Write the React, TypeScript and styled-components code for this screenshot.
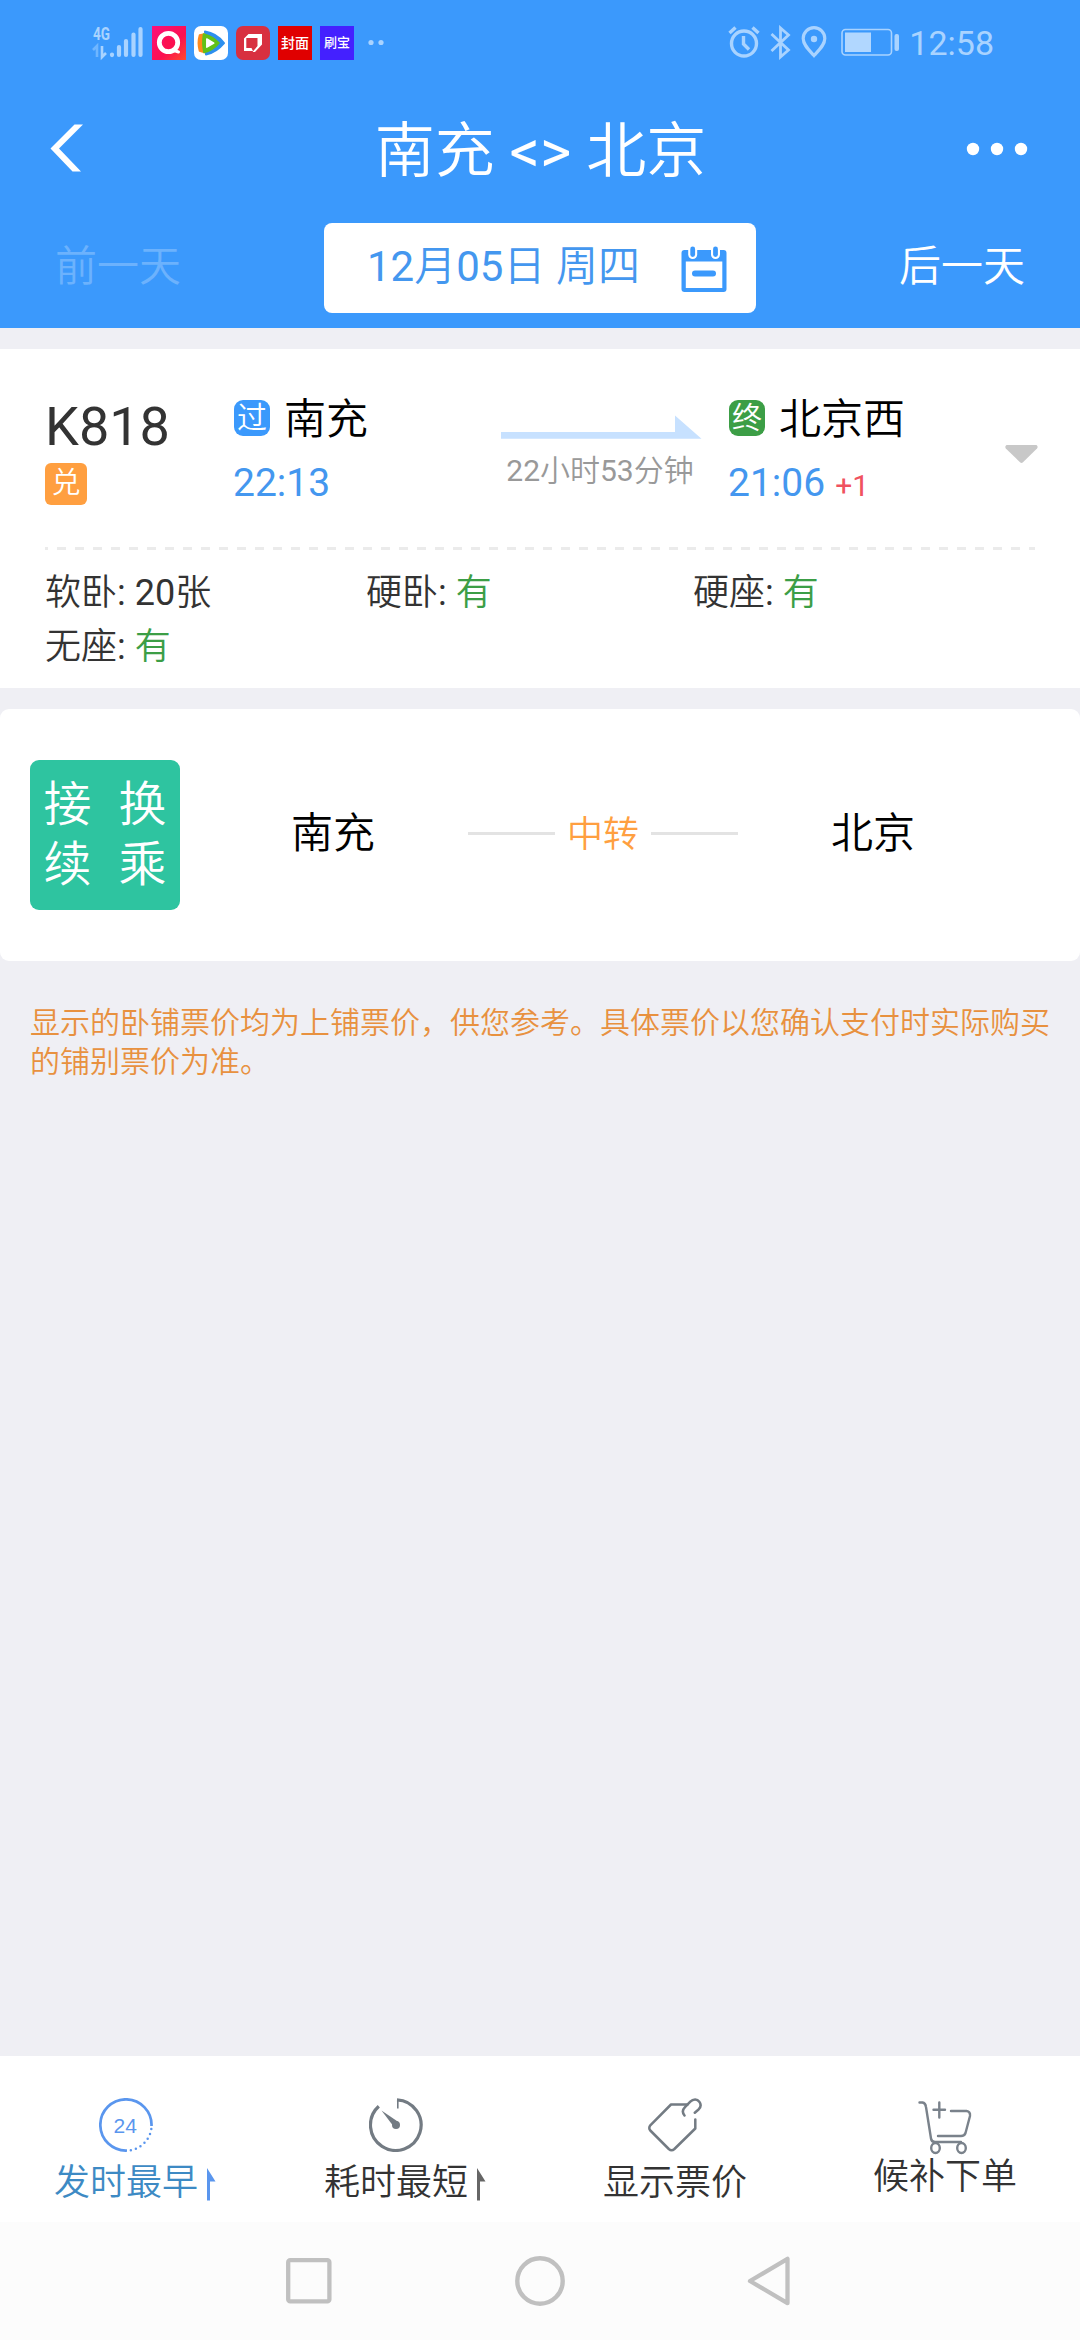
import React from 'react';
import styled, { createGlobalStyle } from 'styled-components';

const BLUE = '#3b99fc';
const INK = '#333333';
const GREEN = '#3c9e46';
const ORANGE = '#ff9f40';
const STATUS = '#a9d3ff';

const GlobalStyle = createGlobalStyle`
  * { box-sizing: border-box; }
  body {
    margin: 0;
    background: #efeff4;
    font-family: Roboto, "Noto Sans CJK SC", sans-serif;
    font-weight: 400;
    color: ${INK};
  }
  svg { display: block; flex: none; }
`;

const Screen = styled.div`
  width: 1080px;
  height: 2340px;
  display: flex;
  flex-direction: column;
  background: #efeff4;
  overflow: hidden;
`;

/* Chinese runs are set one step lighter than the digits beside them. */
const Han = styled.span`
  font-weight: 350;
`;

/* ---------- header ---------- */

const Header = styled.header`
  height: 328px;
  background: ${BLUE};
  display: flex;
  flex-direction: column;
`;

const StatusBar = styled.div`
  height: 86px;
  padding: 0 86px 0 90px;
  display: flex;
  justify-content: space-between;
  align-items: center;
`;

const StatusGroup = styled.div<{ $gap: number }>`
  display: flex;
  align-items: center;
  gap: ${(p) => p.$gap}px;
`;

const Clock = styled.span`
  font-size: 34px;
  line-height: 40px;
  color: ${STATUS};
  margin-left: 2px;
`;

const AppIcon = styled.span<{ $bg: string; $radius?: number; $size?: number }>`
  width: 34px;
  height: 34px;
  display: flex;
  align-items: center;
  justify-content: center;
  background: ${(p) => p.$bg};
  border-radius: ${(p) => p.$radius ?? 0}px;
  color: #fff;
  font-size: ${(p) => p.$size ?? 14}px;
  font-weight: 500;
  line-height: 34px;
  white-space: nowrap;
`;

const TitleBar = styled.div`
  height: 130px;
  padding: 0 52px 0 50px;
  display: grid;
  grid-template-columns: 80px 1fr 80px;
  align-items: center;
`;

const Title = styled.h1`
  margin: 2px 0 0;
  padding-left: 3px;
  text-align: center;
  font-size: 60px;
  font-weight: 400;
  line-height: 70px;
  color: #fff;
`;

const StartSlot = styled.div`
  display: flex;
  padding-bottom: 6px;
`;

const EndSlot = styled.div`
  display: flex;
  justify-content: flex-end;
  padding-bottom: 5px;
`;

const DateBar = styled.div`
  height: 104px;
  margin-top: 7px;
  padding: 0 55px 0 55px;
  display: grid;
  grid-template-columns: 269px 432px 269px;
  align-items: start;
`;

const DayLink = styled.span<{ $dim?: boolean; $end?: boolean }>`
  font-size: 42px;
  font-weight: 350;
  line-height: 87px;
  color: ${(p) => (p.$dim ? '#6cb2fd' : '#fff')};
  text-align: ${(p) => (p.$end ? 'right' : 'left')};
`;

const DateBox = styled.div`
  height: 90px;
  border-radius: 8px;
  background: #fff;
  display: flex;
  align-items: flex-start;
  justify-content: space-between;
  padding: 0 29px 0 43px;
  font-size: 42px;
  line-height: 87px;
  color: #4497ef;
`;

const CalendarSlot = styled.span`
  padding-top: 23px;
`;

/* ---------- train card ---------- */

const TrainCard = styled.section`
  margin-top: 21px;
  height: 339px;
  background: #fff;
  padding: 0 42px 0 45px;
`;

const TrainTop = styled.div`
  height: 198px;
  padding-top: 50px;
  display: grid;
  grid-template-columns: 189px 267px 228px 276px 33px;
  align-items: start;
`;

const TrainNo = styled.div`
  font-size: 54px;
  line-height: 56px;
`;

const Exchange = styled.div`
  margin-top: 8px;
  width: 42px;
  height: 42px;
  border-radius: 6px;
  background: ${ORANGE};
  color: #fff;
  font-size: 29px;
  font-weight: 350;
  line-height: 41px;
  text-align: center;
`;

const StationRow = styled.div`
  display: flex;
  align-items: flex-start;
  gap: 14px;
  height: 42px;
  font-size: 42px;
  font-weight: 350;
  line-height: 42px;
  color: #000;
  white-space: nowrap;
`;

const StationBadge = styled.span<{ $bg: string }>`
  width: 36px;
  height: 36px;
  margin-top: 1px;
  border-radius: 9px;
  background: ${(p) => p.$bg};
  color: #fff;
  font-size: 30px;
  line-height: 35px;
  text-align: center;
`;

const Time = styled.div`
  margin: 18px 0 0 -1px;
  font-size: 39px;
  line-height: 48px;
  color: #4497ef;
`;

const PlusDay = styled.span`
  margin-left: 10px;
  font-size: 30px;
  color: #f0525f;
`;

const Leg = styled.div`
  width: 201px;
  padding-top: 16px;
`;

const Duration = styled.div`
  margin-top: 14px;
  padding-right: 3px;
  font-size: 30px;
  line-height: 36px;
  text-align: center;
  color: #999;
  white-space: nowrap;
`;

const Caret = styled.div`
  padding-top: 46px;
`;

const Dashes = styled.div`
  width: 990px;
  height: 3px;
  background: repeating-linear-gradient(90deg, #ebebeb 0 9px, transparent 9px 18px);
  background-position-x: -6px;
  background-size: 1008px 3px;
`;

const Seats = styled.div`
  padding-top: 16px;
  display: grid;
  grid-template-columns: 321px 327px 1fr;
  font-size: 36px;
  line-height: 54px;
`;

const Available = styled(Han)`
  color: ${GREEN};
`;

/* ---------- transfer card ---------- */

const TransferCard = styled.section`
  margin-top: 21px;
  height: 252px;
  padding: 0 72px 0 30px;
  border-radius: 9px;
  background: #fff;
  display: grid;
  grid-template-columns: 168px 270px 270px 270px;
  align-items: center;
  font-weight: 350;
`;

const TransferTag = styled.div`
  width: 150px;
  height: 150px;
  padding-top: 15px;
  border-radius: 9px;
  background: #2ec4a0;
  color: #fff;
  display: grid;
  grid-template-columns: 75px 75px;
  grid-auto-rows: 60px;
  justify-items: center;
  font-size: 48px;
  line-height: 60px;
`;

const City = styled.div`
  text-align: center;
  font-size: 42px;
  line-height: 48px;
  padding-bottom: 2px;
  color: #000;
`;

const Via = styled.div`
  display: flex;
  align-items: center;
  justify-content: space-between;
  font-size: 36px;
  line-height: 48px;
  color: ${ORANGE};
`;

const Rule = styled.span`
  width: 87px;
  height: 3px;
  background: #e3e3e3;
  margin-bottom: 3px;
`;

const Notice = styled.p`
  margin: 0;
  padding: 42px 30px 0;
  font-size: 30px;
  font-weight: 350;
  line-height: 39px;
  color: #e8913f;
  word-break: break-all;
`;

/* ---------- bottom ---------- */

const TabBar = styled.nav`
  margin-top: auto;
  height: 166px;
  background: #fff;
  display: grid;
  grid-template-columns: repeat(4, 270px);
`;

const Tab = styled.div<{ $top: number; $color?: string }>`
  padding-top: ${(p) => p.$top}px;
  display: flex;
  justify-content: center;
  align-items: flex-start;
  color: ${(p) => p.$color ?? INK};
`;

const TabBody = styled.div<{ $gap: number }>`
  display: flex;
  flex-direction: column;
  align-items: center;
  gap: ${(p) => p.$gap}px;
  font-size: 36px;
  font-weight: 350;
  line-height: 42px;
`;

const SortArrow = styled.div`
  padding: 70px 0 0 9px;
`;

const SystemNav = styled.div`
  height: 118px;
  background: #fcfcfc;
  padding: 0 289px 0 285px;
  display: flex;
  align-items: center;
  justify-content: space-between;
`;

/* ---------- drawings ---------- */

const Signal = () => (
  <svg width="54" height="40" viewBox="90 23 54 40">
    <text x="93" y="40.3" fontSize="18.5" fontWeight="700" fill={STATUS} textLength="17" lengthAdjust="spacingAndGlyphs">4G</text>
    <g stroke={STATUS} strokeWidth="4.2" strokeLinecap="round">
      <path d="M112 54.5v.6M119 47v8M126 41v14M133.5 34.5V55M140.5 29v26" />
    </g>
    <path d="M93 50l4-4v11" fill="none" stroke="#6fb6ff" strokeWidth="2.6" />
    <path d="M102 46v11l4-4" fill="none" stroke={STATUS} strokeWidth="2.6" />
  </svg>
);

const VideoRing = () => (
  <svg width="34" height="34" viewBox="0 0 34 34">
    <defs>
      <linearGradient id="ring" x1="0" y1="0" x2="1" y2="1">
        <stop offset="0" stopColor="#fb0f7c" />
        <stop offset=".6" stopColor="#fb1050" />
        <stop offset="1" stopColor="#ff4a2c" />
      </linearGradient>
    </defs>
    <rect width="34" height="34" fill="url(#ring)" />
    <circle cx="16.5" cy="16.5" r="9.2" fill="none" stroke="#fff" strokeWidth="4.8" />
    <path d="M22 24.500l4.500 1.500" stroke="#fff" strokeWidth="3" strokeLinecap="round" />
    <path d="M13.500 12v9.500l8-4.700z" fill="#fb1050" stroke="#fb1050" strokeWidth="2" strokeLinejoin="round" />
  </svg>
);

const PlayLeaf = () => (
  <svg width="34" height="34" viewBox="0 0 34 34">
    <path d="M11 5.500c7 1 14 5 19 11.500c-5 6-11 10-18 11.500z" fill="#2d8fee" stroke="#2d8fee" strokeWidth="2" strokeLinejoin="round" />
    <path d="M5.500 9c-1.500 5-1.500 11 0 16l5 1.500V8z" fill="#ff8a1c" stroke="#ff8a1c" strokeWidth="1.500" strokeLinejoin="round" />
    <path d="M9.500 8c6 1.500 11 4 15.500 9c-4 5-9 8-15 9.500c-1.500-6-1.500-12-.5-18.500z" fill="#62c118" stroke="#62c118" strokeWidth="1.500" strokeLinejoin="round" />
    <path d="M12.800 13v8.200l7-4.100z" fill="#fff" stroke="#fff" strokeWidth="1.500" strokeLinejoin="round" />
  </svg>
);

const FoldedPage = () => (
  <svg width="34" height="34" viewBox="0 0 34 34">
    <path d="M12.500 8H26V18.500L19 26H16.500L21.500 20V12H10.300V22H15.500L17 25H8V12.500z" fill="#fff" />
  </svg>
);

const MoreApps = () => (
  <svg width="22" height="8" viewBox="-6 0 22 8">
    <circle cx="3" cy="3.500" r="2.600" fill={STATUS} />
    <circle cx="13" cy="3.500" r="2.600" fill={STATUS} />
  </svg>
);

const StatusRight = () => (
  <svg width="174" height="36" viewBox="727 25 174 36">
    <g fill="none" stroke={STATUS} strokeWidth="3.400">
      <circle cx="744" cy="43.500" r="12.500" />
      <path d="M743.500 36v8l5.500 5.500" />
      <path d="M729.500 33l6-5.500M758.500 33l-6-5.500" />
      <path d="M771.500 34l17 16-8 7V28l8 7-17 16" strokeWidth="2.800" />
      <path d="M814 55.500c-5-5.500-10.800-10.500-10.800-17a10.800 10.800 0 0 1 21.600 0c0 6.500-5.800 11.500-10.800 17z" strokeWidth="3.200" />
    </g>
    <circle cx="814" cy="39" r="3.200" fill={STATUS} />
    <rect x="842" y="29.500" width="49.500" height="25.500" rx="3.500" fill="none" stroke={STATUS} strokeWidth="1.600" />
    <rect x="845" y="32.500" width="26" height="19.500" fill="#b1d7ff" />
    <rect x="894.500" y="34" width="4.500" height="17" rx="2" fill={STATUS} />
  </svg>
);

const Calendar = () => (
  <svg width="46" height="46" viewBox="0 0 46 46">
    <rect x="0.500" y="4" width="45" height="42" rx="3" fill={BLUE} />
    <rect x="4.800" y="15.500" width="36.500" height="26.500" fill="#fff" />
    <rect x="7.200" y="-3" width="9" height="16" rx="4.500" fill="#fff" />
    <rect x="30" y="-3" width="9" height="16" rx="4.500" fill="#fff" />
    <rect x="9.300" y="0.500" width="4.800" height="10.500" rx="2.400" fill={BLUE} />
    <rect x="32.100" y="0.500" width="4.800" height="10.500" rx="2.400" fill={BLUE} />
    <rect x="11" y="24.500" width="24" height="6" rx="3" fill={BLUE} />
  </svg>
);

const TravelArrow = () => (
  <svg width="201" height="24" viewBox="0 0 201 24">
    <path d="M0 17h174V0.500L200.500 23.700H0z" fill="#c7e1ff" />
  </svg>
);

const Hours24 = () => (
  <svg width="54" height="54" viewBox="0 0 54 54">
    <path d="M52.500 28A25.600 25.600 0 1 0 28 52.500" fill="none" stroke="#5a96ee" strokeWidth="2.700" />
    <path d="M52.300 31A25.600 25.600 0 0 1 30 52.500" fill="none" stroke="#5a96ee" strokeWidth="2.500" strokeLinecap="round" strokeDasharray="0 5.200" />
    <text x="26.300" y="35" textAnchor="middle" fontFamily="Liberation Sans" fontSize="21" fill="#5a96ee">24</text>
  </svg>
);

const Timer = () => (
  <svg width="54" height="54" viewBox="0 0 54 54">
    <path d="M28 1.800A25.300 25.300 0 1 1 9.800 8.300" fill="none" stroke="#737b83" strokeWidth="3.200" />
    <path d="M28.800 1v9.500" stroke="#737b83" strokeWidth="1.600" />
    <path d="M12.500 12.500l17.300 11.800-4.800 4.800z" fill="#737b83" />
    <circle cx="27" cy="27" r="4" fill="#737b83" />
  </svg>
);

const PriceTag = () => (
  <svg width="54" height="54" viewBox="0 0 54 54">
    <g fill="none" stroke="#737b83" strokeWidth="2.500" strokeLinejoin="round" strokeLinecap="round">
      <path d="M39.500 6.500H23L2.300 27.300q-2 2.700 0 5.200L20.800 51q2.800 2.500 5.600 0L47.300 30.500V21.500" />
      <path d="M36.500 17.500c-2.500-3-1.800-6 .5-8.300l5.300-5.500c3-3 7-2.700 9 0c2 2.600 1.500 5.300-.5 7.500l-4 3.500" />
    </g>
  </svg>
);

const Cart = () => (
  <svg width="54" height="54" viewBox="0 0 54 54">
    <g fill="none" stroke="#7a828b" strokeWidth="2.400" strokeLinejoin="round" strokeLinecap="round">
      <path d="M1.500 1.500H4.500Q7.500 2 8 6L13 37.500Q13.500 41 17 41H43" />
      <path d="M33 10H48.500Q52.500 10.500 52 15L47.500 32Q46.500 35 43 35H20" />
      <path d="M15.500 8.700H27M21.300 1.500V16.500" />
      <ellipse cx="17.500" cy="47" rx="4.300" ry="5" />
      <ellipse cx="43.500" cy="47" rx="4.300" ry="5" />
    </g>
  </svg>
);

const UpArrow = ({ color }: { color: string }) => (
  <svg width="9" height="33" viewBox="0 0 9 33">
    <path d="M0 0l8.500 13.500H3V32.500H0z" fill={color} />
  </svg>
);

const seats = [
  { kind: '软卧', count: 20 },
  { kind: '硬卧' },
  { kind: '硬座' },
  { kind: '无座' },
];

export default function App() {
  return (
    <>
      <GlobalStyle />
      <Screen>
        <Header>
          <StatusBar>
            <StatusGroup $gap={8}>
              <Signal />
              <AppIcon $bg="#fb1050"><VideoRing /></AppIcon>
              <AppIcon $bg="#fff" $radius={7}><PlayLeaf /></AppIcon>
              <AppIcon $bg="#d83040" $radius={7}><FoldedPage /></AppIcon>
              <AppIcon $bg="#e00000" $size={14}>封面</AppIcon>
              <AppIcon $bg="#4420ff" $size={13}>刷宝</AppIcon>
              <MoreApps />
            </StatusGroup>
            <StatusGroup $gap={6}>
              <StatusRight />
              <Clock>12:58</Clock>
            </StatusGroup>
          </StatusBar>
          <TitleBar>
            <StartSlot>
              <svg width="33" height="48" viewBox="0 0 33 48">
                <path d="M24.500 .5H33L9 24.500L31 47.500H22.500L.5 24.500z" fill="#fff" />
              </svg>
            </StartSlot>
            <Title><Han>南充</Han> &lt;&gt; <Han>北京</Han></Title>
            <EndSlot>
              <svg width="62" height="14" viewBox="0 0 62 14">
                <circle cx="7" cy="7" r="6.200" fill="#fff" />
                <circle cx="31" cy="7" r="6.200" fill="#fff" />
                <circle cx="55" cy="7" r="6.200" fill="#fff" />
              </svg>
            </EndSlot>
          </TitleBar>
          <DateBar>
            <DayLink $dim>前一天</DayLink>
            <DateBox>
              <span>12<Han>月</Han>05<Han>日</Han> <Han>周四</Han></span>
              <CalendarSlot><Calendar /></CalendarSlot>
            </DateBox>
            <DayLink $end>后一天</DayLink>
          </DateBar>
        </Header>

        <TrainCard>
          <TrainTop>
            <div>
              <TrainNo>K818</TrainNo>
              <Exchange>兑</Exchange>
            </div>
            <div>
              <StationRow>
                <StationBadge $bg={BLUE}>过</StationBadge>
                南充
              </StationRow>
              <Time>22:13</Time>
            </div>
            <Leg>
              <TravelArrow />
              <Duration>22<Han>小时</Han>53<Han>分钟</Han></Duration>
            </Leg>
            <div>
              <StationRow>
                <StationBadge $bg={GREEN}>终</StationBadge>
                北京西
              </StationRow>
              <Time>
                21:06<PlusDay>+1</PlusDay>
              </Time>
            </div>
            <Caret>
              <svg width="33" height="19" viewBox="0 0 33 19">
                <path d="M1.500 0h30q2 1.500 .5 3.500L18 17.300q-1.500 1.200-3 0L.8 3.500Q-.5 1.500 1.500 0z" fill="#c8c8c8" />
              </svg>
            </Caret>
          </TrainTop>
          <Dashes />
          <Seats>
            {seats.map((s) => (
              <div key={s.kind}>
                <Han>{s.kind}</Han>:{' '}
                {s.count ? <>{s.count}<Han>张</Han></> : <Available>有</Available>}
              </div>
            ))}
          </Seats>
        </TrainCard>

        <TransferCard>
          <TransferTag>
            <span>接</span>
            <span>换</span>
            <span>续</span>
            <span>乘</span>
          </TransferTag>
          <City>南充</City>
          <Via>
            <Rule />
            中转
            <Rule />
          </Via>
          <City>北京</City>
        </TransferCard>

        <Notice>
          显示的卧铺票价均为上铺票价，供您参考。具体票价以您确认支付时实际购买的铺别票价为准。
        </Notice>

        <TabBar>
          <Tab $top={42} $color="#3d8ac4">
            <TabBody $gap={10}>
              <Hours24 />
              发时最早
            </TabBody>
            <SortArrow><UpArrow color="#5a96ee" /></SortArrow>
          </Tab>
          <Tab $top={42}>
            <TabBody $gap={10}>
              <Timer />
              耗时最短
            </TabBody>
            <SortArrow><UpArrow color="#666666" /></SortArrow>
          </Tab>
          <Tab $top={42}>
            <TabBody $gap={10}>
              <PriceTag />
              显示票价
            </TabBody>
          </Tab>
          <Tab $top={45}>
            <TabBody $gap={1}>
              <Cart />
              候补下单
            </TabBody>
          </Tab>
        </TabBar>

        <SystemNav>
          <svg width="48" height="48" viewBox="0 0 48 48">
            <rect x="3.200" y="3.200" width="41.200" height="41.200" rx="2" fill="none" stroke="#c0c0c0" strokeWidth="4.300" />
          </svg>
          <svg width="50" height="50" viewBox="0 0 50 50">
            <circle cx="25" cy="25" r="22.700" fill="none" stroke="#c0c0c0" strokeWidth="4.400" />
          </svg>
          <svg width="44" height="50" viewBox="0 0 44 50">
            <path d="M40.500 2.800V47.200L3 25z" fill="none" stroke="#c0c0c0" strokeWidth="4.300" strokeLinejoin="round" />
          </svg>
        </SystemNav>
      </Screen>
    </>
  );
}
